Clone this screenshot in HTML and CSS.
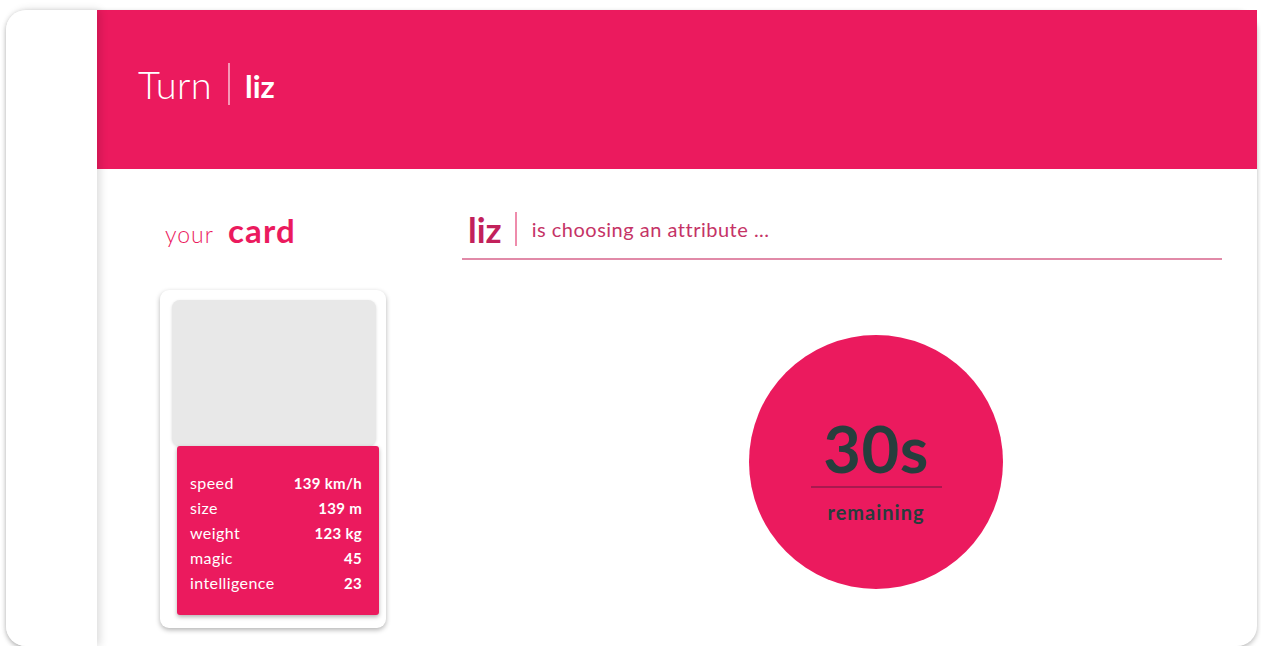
FILE: index.html
```html
<!DOCTYPE html>
<html>
<head>
<meta charset="utf-8">
<link rel="stylesheet" href="styles.css">
</head>
<body>
<div class="app">
  <aside class="sidebar"></aside>
  <main class="main">
    <header class="header">
      <span class="turn">Turn</span>
      <span class="sep"></span>
      <span class="player">liz</span>
    </header>
    <section class="content">
      <div class="left">
        <h2 class="your-card"><span class="your">your</span><span class="card-word">card</span></h2>
        <div class="card">
          <div class="card-img"></div>
          <div class="stats">
            <div class="row"><span>speed</span><b>139 km/h</b></div>
            <div class="row"><span>size</span><b>139 m</b></div>
            <div class="row"><span>weight</span><b>123 kg</b></div>
            <div class="row"><span>magic</span><b>45</b></div>
            <div class="row"><span>intelligence</span><b>23</b></div>
          </div>
        </div>
      </div>
      <div class="right">
        <div class="status">
          <span class="status-name">liz</span>
          <span class="status-sep"></span>
          <span class="status-text">is choosing an attribute ...</span>
        </div>
        <div class="timer-wrap">
          <div class="timer">
            <div class="secs">30s</div>
            <div class="timer-line"></div>
            <div class="remaining">remaining</div>
          </div>
        </div>
      </div>
    </section>
  </main>
</div>
</body>
</html>
```
FILE: styles.css
```css
* { box-sizing: border-box; }
html, body { margin: 0; padding: 0; background: #fff; }
body { font-family: "Lato", "Open Sans", sans-serif; }

.app {
  display: flex;
  margin: 10px 4px 0 6px;
  width: 1251px;
  height: 636px;
  border-radius: 20px;
  box-shadow: 0 2px 5px rgba(0,0,0,0.28);
  background: #fff;
}
.sidebar {
  width: 91px;
  flex: none;
  background: #fff;
  border-radius: 20px 0 0 20px;
  box-shadow: 3px 0 8px rgba(0,0,0,0.14);
  position: relative;
  z-index: 2;
}
.main {
  flex: 1;
  display: flex;
  flex-direction: column;
  border-radius: 0 0 20px 0;
}
.header {
  height: 159px;
  background: #eb1a5e;
  display: flex;
  align-items: center;
  padding-left: 41px;
  padding-bottom: 12px;
  color: #fff;
}
.turn {
  font-size: 38px;
  font-weight: 300;
  letter-spacing: 0.3px;
}
.sep {
  width: 2px;
  height: 42px;
  background: rgba(255,255,255,0.55);
  margin: 0 15px 0 16px;
}
.player {
  font-size: 31px;
  font-weight: 700;
  margin-top: 4px;
}
.content {
  flex: 1;
  display: flex;
  padding: 37px 35px 0 63px;
}
.left { width: 226px; flex: none; }
.your-card {
  margin: 0 0 40px 5px;
  font-weight: normal;
  color: #eb1a5e;
  display: flex;
  align-items: baseline;
  height: 44px;
  padding-top: 4px;
}
.your { font-size: 23px; font-weight: 300; margin-right: 14px; letter-spacing: 1px; }
.card-word { font-size: 33px; font-weight: 700; letter-spacing: 1.2px; }
.card {
  width: 226px;
  height: 338px;
  border-radius: 9px;
  background: #fff;
  box-shadow: 0 2px 5px rgba(0,0,0,0.3);
  padding: 10px 10px 0 12px;
}
.card-img {
  height: 146px;
  background: #e8e8e8;
  border-radius: 8px;
  box-shadow: 0 1px 3px rgba(0,0,0,0.15);
}
.stats {
  margin-left: 5px;
  margin-right: -3px;
  height: 169px;
  background: #eb1a5e;
  border-radius: 3px;
  box-shadow: 0 2px 4px rgba(0,0,0,0.3);
  padding: 27px 17px 0 13px;
  color: #fff;
  font-size: 16px;
}
.row {
  display: flex;
  justify-content: space-between;
  align-items: baseline;
  height: 25px;
}
.row span { letter-spacing: 0.4px; }
.row b { font-weight: 700; font-size: 15px; letter-spacing: 0.3px; }
.right {
  flex: 1;
  margin-left: 76px;
}
.status {
  display: flex;
  align-items: center;
  height: 54px;
  border-bottom: 2px solid #e18aa8;
  padding-left: 6px;
  padding-bottom: 6px;
}
.status-name {
  font-size: 35px;
  font-weight: 700;
  color: #c2215b;
}
.status-sep {
  width: 2px;
  height: 34px;
  background: #ee8cac;
  margin: 0 15px 0 13px;
}
.status-text {
  font-size: 20px;
  color: #c53366;
  margin-top: 0;
  letter-spacing: 0.5px;
}
.timer-wrap {
  padding-top: 75px;
  padding-left: 287px;
}
.timer {
  width: 254px;
  height: 254px;
  border-radius: 50%;
  background: #eb1a5e;
  display: flex;
  flex-direction: column;
  align-items: center;
  padding-top: 76px;
  color: #263e3d;
}
.secs {
  font-size: 65px;
  font-weight: 700;
  line-height: 74px;
  letter-spacing: 0.5px;
}
.timer-line {
  width: 131px;
  height: 2px;
  background: #a9194f;
  margin-top: 1px;
}
.remaining {
  font-size: 20px;
  font-weight: 700;
  margin-top: 12px;
  letter-spacing: 1px;
}
```
